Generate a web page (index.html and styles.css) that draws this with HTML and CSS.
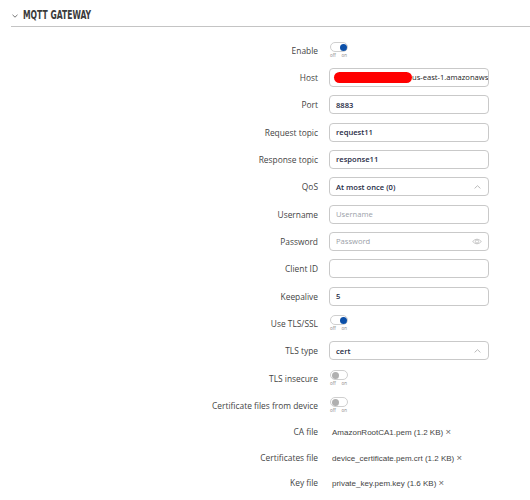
FILE: index.html
```html
<!DOCTYPE html>
<html>
<head>
<meta charset="utf-8">
<link rel="stylesheet" href="styles.css">
</head>
<body>
<div class="section">
  <div class="section-head">
    <svg class="chev" width="6" height="4" viewBox="0 0 6 4"><path d="M0.5 0.8 L3 3.2 L5.5 0.8" fill="none" stroke="#666" stroke-width="0.9"/></svg>
    <span class="title">MQTT GATEWAY</span>
  </div>
  <div class="form">
    <div class="row"><label>Enable</label><div class="toggle on"><span class="track"><span class="knob"></span></span><span class="tl"><i>off</i><i>on</i></span></div></div>
    <div class="row"><label>Host</label><div class="input"><span class="redact"></span><span class="val light">us-east-1.amazonaws</span></div></div>
    <div class="row"><label>Port</label><div class="input"><span class="val">8883</span></div></div>
    <div class="row"><label>Request topic</label><div class="input"><span class="val">request11</span></div></div>
    <div class="row"><label>Response topic</label><div class="input"><span class="val">response11</span></div></div>
    <div class="row"><label>QoS</label><div class="input select"><span class="val">At most once (0)</span><svg class="caret" width="7" height="4" viewBox="0 0 7 4"><path d="M0.6 3.4 L3.5 0.7 L6.4 3.4" fill="none" stroke="#aaa" stroke-width="0.8"/></svg></div></div>
    <div class="row"><label>Username</label><div class="input"><span class="ph">Username</span></div></div>
    <div class="row"><label>Password</label><div class="input select"><span class="ph">Password</span><svg class="eye" width="10" height="7" viewBox="0 0 10 7"><path d="M0.6 3.5 Q5 -1.2 9.4 3.5 Q5 8.2 0.6 3.5 Z" fill="none" stroke="#b5b5b5" stroke-width="0.7"/><circle cx="5" cy="3.5" r="1.6" fill="none" stroke="#b5b5b5" stroke-width="0.7"/></svg></div></div>
    <div class="row"><label>Client ID</label><div class="input"></div></div>
    <div class="row"><label>Keepalive</label><div class="input"><span class="val">5</span></div></div>
    <div class="row"><label>Use TLS/SSL</label><div class="toggle on"><span class="track"><span class="knob"></span></span><span class="tl"><i>off</i><i>on</i></span></div></div>
    <div class="row"><label>TLS type</label><div class="input select"><span class="val">cert</span><svg class="caret" width="7" height="4" viewBox="0 0 7 4"><path d="M0.6 3.4 L3.5 0.7 L6.4 3.4" fill="none" stroke="#aaa" stroke-width="0.8"/></svg></div></div>
    <div class="row"><label>TLS insecure</label><div class="toggle"><span class="track"><span class="knob"></span></span><span class="tl"><i>off</i><i>on</i></span></div></div>
    <div class="row"><label>Certificate files from device</label><div class="toggle"><span class="track"><span class="knob"></span></span><span class="tl"><i>off</i><i>on</i></span></div></div>
    <div class="row file"><label>CA file</label><div class="fname">AmazonRootCA1.pem (1.2 KB) <span class="x">×</span></div></div>
    <div class="row file"><label>Certificates file</label><div class="fname">device_certificate.pem.crt (1.2 KB) <span class="x">×</span></div></div>
    <div class="row file"><label>Key file</label><div class="fname">private_key.pem.key (1.6 KB) <span class="x">×</span></div></div>
  </div>
</div>
</body>
</html>
```
FILE: styles.css
```css
html, body {
  margin: 0;
  padding: 0;
  background: #fff;
}
body {
  font-family: "Open Sans", "Noto Sans", sans-serif;
  color: #404040;
}
.section-head {
  margin-left: 11px;
  height: 27px;
  border-bottom: 1.5px solid #c4c4c4;
  display: flex;
  align-items: center;
  padding-top: 2px;
  box-sizing: border-box;
}
.chev {
  margin-left: 1px;
  margin-right: 5px;
  margin-top: 3px;
}
.title {
  display: inline-block;
  font-family: "DejaVu Sans Condensed", "DejaVu Sans", sans-serif;
  font-weight: bold;
  font-size: 12.5px;
  color: #3b3b3b;
  transform: scaleX(0.68);
  transform-origin: left center;
}
.form {
  padding-top: 9.5px;
}
.row {
  display: grid;
  grid-template-columns: 318px 160px;
  column-gap: 11px;
  height: 27.33px;
  align-items: center;
}
.row.file {
  height: 25.5px;
}
.row label {
  text-align: right;
  font-size: 8.4px;
  color: #444;
  white-space: nowrap;
}
.input {
  height: 19px;
  box-sizing: border-box;
  border: 1px solid #c9c9c9;
  border-radius: 4px;
  display: flex;
  align-items: center;
  padding-left: 6px;
  padding-right: 6px;
  overflow: hidden;
  white-space: nowrap;
}
.select {
  justify-content: space-between;
}
.val {
  font-size: 7.6px;
  color: #1f2b45;
  font-weight: 600;
}
.val.light {
  font-weight: 400;
  color: #222;
}
.ph {
  font-size: 7.6px;
  color: #9aa0a8;
}
.redact {
  display: inline-block;
  width: 78px;
  height: 11px;
  background: #ff0000;
  border-radius: 6px;
  margin-left: -2px;
  flex: none;
}
.caret {
  margin-right: 1px;
}
.toggle {
  display: flex;
  flex-direction: column;
  width: 20px;
  padding-left: 1px;
}
.track {
  position: relative;
  width: 18px;
  height: 10px;
  box-sizing: border-box;
  border: 1px solid #cfcfcf;
  border-radius: 6px;
  background: #fff;
}
.knob {
  position: absolute;
  top: 0.5px;
  left: 1px;
  width: 7px;
  height: 7px;
  border-radius: 50%;
  background: #b0b0b0;
}
.toggle.on .knob {
  left: auto;
  right: 0.5px;
  background: #0b4fa8;
}
.tl {
  display: flex;
  justify-content: space-between;
  width: 17px;
  margin-top: 1px;
  font-size: 4.5px;
  line-height: 5px;
  color: #888;
}
.tl i {
  font-style: normal;
}
.fname {
  font-family: "Liberation Sans", Arial, sans-serif;
  font-size: 8px;
  color: #444;
  padding-left: 3px;
  white-space: nowrap;
}
.x {
  font-size: 9.5px;
  color: #666;
}
```
